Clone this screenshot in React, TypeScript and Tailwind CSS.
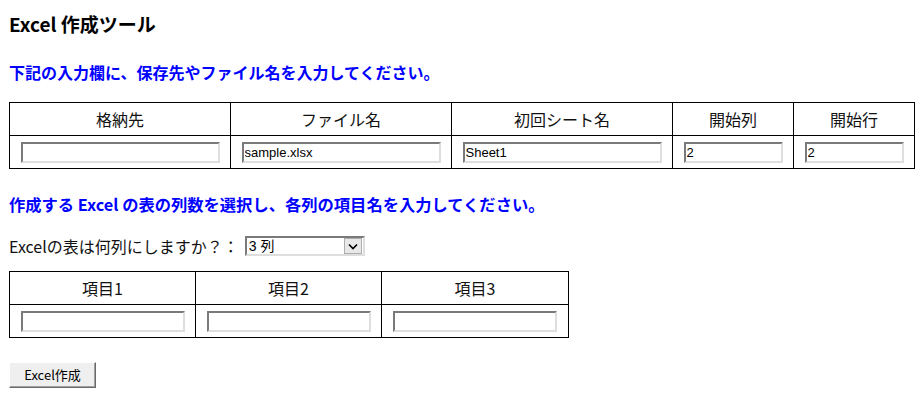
const JP = "font-['Noto_Sans_CJK_JP','Noto_Sans',sans-serif]"
const AR = "font-['Liberation_Sans','Noto_Sans_CJK_JP',sans-serif]"

const inputCls =
  `${AR} block mx-auto h-[21px] border-2 border-t-[#7a7a7a] border-l-[#7a7a7a] border-b-[#dedede] border-r-[#dedede] bg-white px-[1px] text-[13px] leading-none text-black outline-none`

type Col = { label: string; value: string; width: number; inputW: number }

const cols1: Col[] = [
  { label: '格納先', value: '', width: 221, inputW: 199 },
  { label: 'ファイル名', value: 'sample.xlsx', width: 221, inputW: 199 },
  { label: '初回シート名', value: 'Sheet1', width: 221, inputW: 199 },
  { label: '開始列', value: '2', width: 121, inputW: 99 },
  { label: '開始行', value: '2', width: 121, inputW: 99 },
]

const cols2: Col[] = [
  { label: '項目1', value: '', width: 186, inputW: 164 },
  { label: '項目2', value: '', width: 186, inputW: 164 },
  { label: '項目3', value: '', width: 187, inputW: 164 },
]

function FormTable({ cols }: { cols: Col[] }) {
  return (
    <table className="table-fixed border-collapse border border-black">
      <colgroup>
        {cols.map((c) => (
          <col key={c.label} style={{ width: c.width }} />
        ))}
      </colgroup>
      <tbody>
        <tr className="h-[33px]">
          {cols.map((c) => (
            <td key={c.label} className="border border-black p-0 text-center text-[16px] leading-[20px] text-[#111]">
              {c.label}
            </td>
          ))}
        </tr>
        <tr className="h-[33px]">
          {cols.map((c) => (
            <td key={c.label} className="border border-black p-0">
              <input className={inputCls} style={{ width: c.inputW }} defaultValue={c.value} />
            </td>
          ))}
        </tr>
      </tbody>
    </table>
  )
}

export default function App() {
  return (
    <div className={`${JP} min-h-[396px] w-[920px] bg-white pl-[9px] pr-[4px] text-black`}>
      <h3 className="pt-[12px] text-[19px] font-bold leading-[24px]">Excel 作成ツール</h3>

      <p className="mt-[26px] text-[16px] font-bold leading-[20px] text-[#0000ff]">
        下記の入力欄に、保存先やファイル名を入力してください。
      </p>

      <div className="mt-[20px]">
        <FormTable cols={cols1} />
      </div>

      <p className="mt-[25px] text-[16.3px] font-bold leading-[20px] text-[#0000ff]">
        作成する Excel の表の列数を選択し、各列の項目名を入力してください。
      </p>

      <div className="mt-[22px] flex h-[20px] items-center">
        <span className="text-[16px] leading-[20px] text-[#111]">Excelの表は何列にしますか？：</span>
        <div className="ml-[6px] flex h-[20px] w-[120px] items-center border-2 border-t-[#7a7a7a] border-l-[#7a7a7a] border-b-[#dedede] border-r-[#dedede] bg-white">
          <span className={`${AR} flex-1 pl-[2px] text-[14px] leading-none`}>3 列</span>
          <div className="mr-[1px] flex h-[16px] w-[18px] items-center justify-center border border-[#adadad] bg-[#e8e8e8]">
            <svg width="10" height="7" viewBox="0 0 10 7">
              <path d="M1 1.5 L5 5.5 L9 1.5" fill="none" stroke="#000" strokeWidth="1.6" />
            </svg>
          </div>
        </div>
      </div>

      <div className="mt-[15px]">
        <FormTable cols={cols2} />
      </div>

      <button
        type="button"
        className={`${AR} mt-[24px] h-[26px] w-[87px] border border-t-white border-l-white border-b-[#6a6a6a] border-r-[#6a6a6a] bg-[#efefef] text-[13px] leading-none text-black shadow-[inset_-1px_-1px_0_#a0a0a0]`}
      >
        <span className={JP}>Excel作成</span>
      </button>
    </div>
  )
}
